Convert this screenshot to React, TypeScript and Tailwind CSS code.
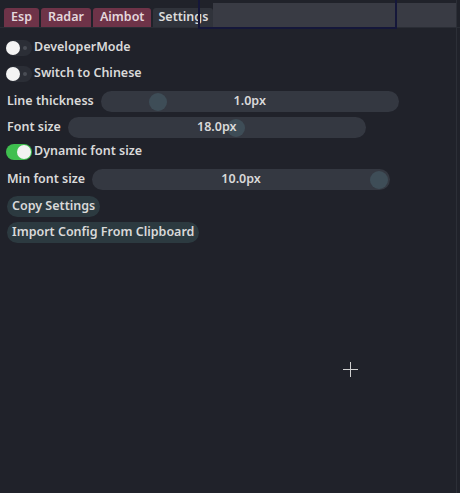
import React, { useState } from 'react';

const font = { fontFamily: '"Noto Sans", "Open Sans", sans-serif' };

const Toggle = ({ on, onClick }: { on: boolean; onClick: () => void }) => (
  <button
    onClick={onClick}
    className={`relative w-[26px] h-[16px] rounded-full ${on ? 'bg-[#3fbf4f]' : 'bg-[#2b2e36]'}`}
  >
    {on ? (
      <span className="absolute right-[1px] top-[1px] w-[14px] h-[14px] rounded-full bg-[#f2f2f2]" />
    ) : (
      <>
        <span className="absolute left-0 top-[1px] w-[14px] h-[14px] rounded-full bg-[#f4f4f4]" />
        <span className="absolute right-[5px] top-[6px] w-[4px] h-[4px] rounded-full bg-[#4a4d55]" />
      </>
    )}
  </button>
);

const Slider = ({ label, value, pos, className }: { label: string; value: string; pos: number; className?: string }) => (
  <div className={`flex items-center h-[21px] ${className ?? ''}`}>
    <span className="pl-[7px] pr-[7px] text-[12.5px] text-[#d9d9d9] font-semibold">{label}</span>
    <div className="relative w-[298px] h-[21px] rounded-full bg-[#343841]">
      <span
        className="absolute top-[2px] w-[18px] h-[18px] rounded-full bg-[#3e4d57]"
        style={{ left: pos }}
      />
      <span className="absolute inset-0 flex items-center justify-center text-[12.5px] text-[#d9d9d9] font-semibold">
        {value}
      </span>
    </div>
  </div>
);

export default function App() {
  const [dev, setDev] = useState(false);
  const [cn, setCn] = useState(false);
  const [dyn, setDyn] = useState(true);

  const tabs = ['Esp', 'Radar', 'Aimbot'];

  return (
    <div className="w-[460px] h-[493px] bg-[#20222a] relative overflow-hidden" style={font}>
      {/* tab bar */}
      <div className="flex items-end h-[28px] pt-[2px] border-b border-[#2a2d35]">
        <div className="flex items-end gap-[2px] pl-[4px] h-full">
          {tabs.map(t => (
            <div
              key={t}
              className="h-[19px] px-[7px] flex items-center rounded-t-[3px] bg-[#6e3348] text-[12.5px] text-[#e4d7dc] font-semibold"
            >
              {t}
            </div>
          ))}
          <div className="h-[19px] px-[5px] flex items-center rounded-t-[3px] bg-[#30333b] text-[12.5px] text-[#dcdcdc] font-semibold">
            Settings
          </div>
        </div>
        <div className="flex-1 h-[24px] bg-[#393b44] mr-[4px]" />
      </div>
      <div className="absolute left-[198px] top-[-2px] w-[199px] h-[31px] border-2 border-[#15173a]" />
      <div className="absolute right-[3px] top-0 bottom-0 w-[1px] bg-[#2c2f37]" />

      <div className="flex flex-col pt-[9px]">
        <div className="flex items-center h-[21px] pl-[6px] gap-[2px]">
          <Toggle on={dev} onClick={() => setDev(!dev)} />
          <span className="text-[12.5px] text-[#d9d9d9] font-semibold">DeveloperMode</span>
        </div>
        <div className="flex items-center h-[21px] pl-[6px] gap-[2px] mt-[5px]">
          <Toggle on={cn} onClick={() => setCn(!cn)} />
          <span className="text-[12.5px] text-[#d9d9d9] font-semibold">Switch to Chinese</span>
        </div>
        <Slider label="Line thickness" value="1.0px" pos={48} className="mt-[7px]" />
        <Slider label="Font size" value="18.0px" pos={159} className="mt-[5px]" />
        <div className="flex items-center h-[21px] pl-[6px] gap-[2px] mt-[3px]">
          <Toggle on={dyn} onClick={() => setDyn(!dyn)} />
          <span className="text-[12.5px] text-[#d9d9d9] font-semibold">Dynamic font size</span>
        </div>
        <Slider label="Min font size" value="10.0px" pos={278} className="mt-[7px]" />
        <div className="flex pl-[7px] mt-[6px]">
          <button className="h-[21px] px-[5px] rounded-full bg-[#2c3a40] text-[12.5px] text-[#d9d9d9] font-semibold">
            Copy Settings
          </button>
        </div>
        <div className="flex pl-[7px] mt-[5px]">
          <button className="h-[21px] px-[5px] rounded-full bg-[#2c3a40] text-[12.5px] text-[#d9d9d9] font-semibold">
            Import Config From Clipboard
          </button>
        </div>
      </div>

      {/* crosshair */}
      <div className="absolute left-[343px] top-[362px] w-[15px] h-[15px]">
        <div className="absolute left-[7px] top-0 w-[1px] h-[15px] bg-[#d0d0d0]" />
        <div className="absolute top-[7px] left-0 h-[1px] w-[15px] bg-[#d0d0d0]" />
      </div>
    </div>
  );
}
